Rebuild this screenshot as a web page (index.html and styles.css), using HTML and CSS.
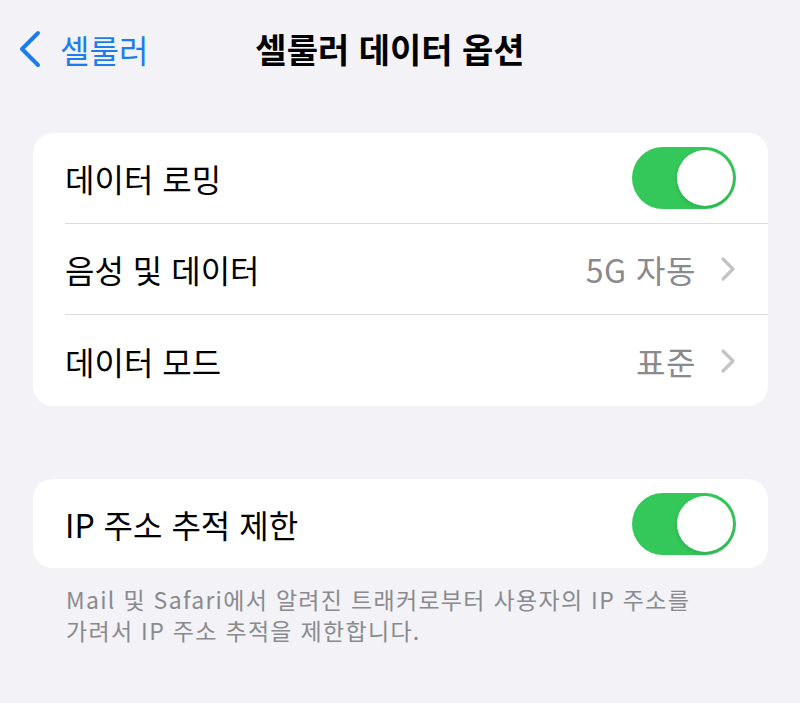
FILE: index.html
```html
<!DOCTYPE html>
<html lang="ko">
<head>
<meta charset="utf-8">
<title>셀룰러 데이터 옵션</title>
<link rel="stylesheet" href="styles.css">
</head>
<body>
<header class="nav">
  <a class="back">
    <svg class="back-icon" width="26" height="38" viewBox="0 0 26 38"><path d="M21 3 L5 19 L21 35" fill="none" stroke="currentColor" stroke-width="4" stroke-linecap="round" stroke-linejoin="round"/></svg>
    <span class="back-label">셀룰러</span>
  </a>
  <h1 class="title">셀룰러 데이터 옵션</h1>
  <div class="nav-spacer"></div>
</header>

<section class="card">
  <div class="row">
    <div class="row-inner">
      <span class="label">데이터 로밍</span>
      <span class="toggle"><span class="knob"></span></span>
    </div>
  </div>
  <div class="row">
    <div class="row-inner">
      <span class="label">음성 및 데이터</span>
      <span class="value">5G 자동</span>
      <svg class="chev" width="16" height="26" viewBox="0 0 16 26"><path d="M3 3 L13 13 L3 23" fill="none" stroke="currentColor" stroke-width="3.2" stroke-linecap="round" stroke-linejoin="round"/></svg>
    </div>
  </div>
  <div class="row">
    <div class="row-inner">
      <span class="label">데이터 모드</span>
      <span class="value">표준</span>
      <svg class="chev" width="16" height="26" viewBox="0 0 16 26"><path d="M3 3 L13 13 L3 23" fill="none" stroke="currentColor" stroke-width="3.2" stroke-linecap="round" stroke-linejoin="round"/></svg>
    </div>
  </div>
</section>

<section class="card card-second">
  <div class="row">
    <div class="row-inner">
      <span class="label">IP 주소 추적 제한</span>
      <span class="toggle"><span class="knob"></span></span>
    </div>
  </div>
</section>
<p class="footer">Mail 및 Safari에서 알려진 트래커로부터 사용자의 IP 주소를<br>가려서 IP 주소 추적을 제한합니다.</p>
</body>
</html>
```
FILE: styles.css
```css
html, body {
  margin: 0;
  padding: 0;
}
body {
  background: #f2f2f7;
  font-family: "Noto Sans CJK KR", "Noto Sans", sans-serif;
  color: #000;
  width: 800px;
  height: 703px;
  overflow: hidden;
}
.nav {
  display: grid;
  grid-template-columns: 1fr auto 1fr;
  align-items: center;
  height: 98px;
}
.back {
  display: flex;
  align-items: center;
  color: #1c7ced;
  padding-left: 17px;
  gap: 17px;
}
.back-icon {
  display: block;
}
.back-label {
  font-size: 32px;
  line-height: 1;
}
.title {
  margin: 0;
  font-size: 34px;
  font-weight: 700;
  line-height: 1;
  position: relative;
  left: -10px;
}
.card {
  background: #fff;
  border-radius: 20px;
  margin: 35px 32px 0 33px;
  overflow: hidden;
}
.card-second {
  margin-top: 73px;
}
.row {
  padding-left: 32px;
  height: 91px;
}
.row-inner {
  height: 100%;
  display: flex;
  align-items: center;
  padding-right: 32px;
  border-bottom: 1.5px solid #dcdce0;
  box-sizing: border-box;
}
.row:last-child .row-inner {
  border-bottom: none;
}
.card-second .row {
  height: 89px;
}
.label {
  font-size: 32px;
  flex: 1;
  line-height: 1;
}
.value {
  font-size: 32px;
  color: #8a8a8e;
  line-height: 1;
  margin-right: 24px;
  letter-spacing: 0.5px;
}
.chev {
  display: block;
  color: #c4c4c7;
  margin-right: 0;
}
.toggle {
  width: 104px;
  height: 62px;
  border-radius: 31px;
  background: #34c759;
  display: flex;
  align-items: center;
  justify-content: flex-end;
  padding: 3px;
  box-sizing: border-box;
}
.knob {
  width: 56px;
  height: 56px;
  border-radius: 50%;
  background: #fff;
  box-shadow: 0 2px 4px rgba(0,0,0,0.12);
}
.footer {
  margin: 16px 0 0 66px;
  font-size: 23px;
  line-height: 31px;
  letter-spacing: 1.3px;
  color: #8a8a8e;
}
```
